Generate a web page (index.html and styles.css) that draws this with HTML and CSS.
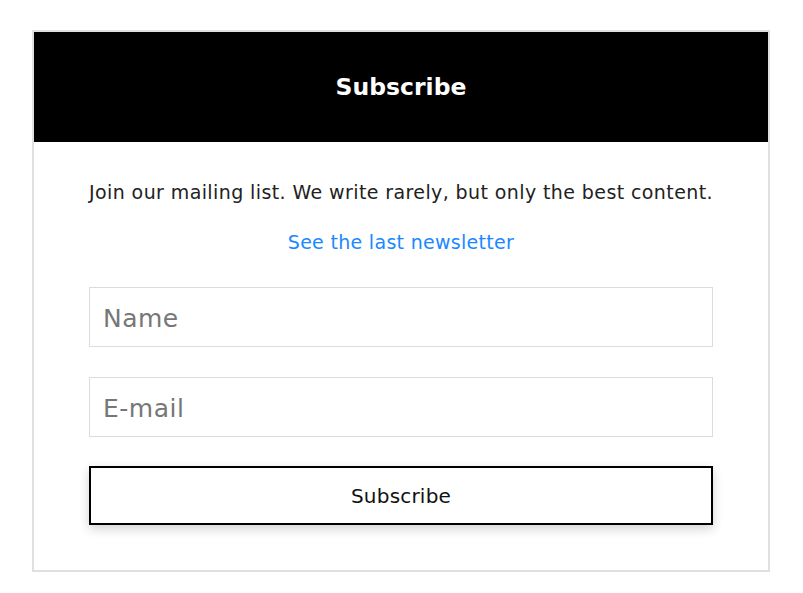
FILE: index.html
```html
<!DOCTYPE html>
<html lang="en">
<head>
<meta charset="utf-8">
<title>Subscribe</title>
<link rel="stylesheet" href="styles.css">
</head>
<body>
<div class="card">
  <header class="card-header">
    <h1 class="card-title">Subscribe</h1>
  </header>
  <div class="card-body">
    <p class="intro">Join our mailing list. We write rarely, but only the best content.</p>
    <a class="last-link" href="#">See the last newsletter</a>
    <form class="form">
      <input class="field" type="text" placeholder="Name">
      <input class="field field-last" type="email" placeholder="E-mail">
      <button class="submit" type="button">Subscribe</button>
    </form>
  </div>
</div>
</body>
</html>
```

FILE: styles.css
```css
* { box-sizing: border-box; }

html, body {
  margin: 0;
  padding: 0;
  background: #fff;
}

body {
  font-family: "DejaVu Sans", "Liberation Sans", sans-serif;
  color: #222;
  padding: 30px 33px 0 32px;
}

.card {
  width: 738px;
  height: 542px;
  border: 2px solid #e0e0e0;
  display: flex;
  flex-direction: column;
}

.card-header {
  height: 110px;
  background: #000;
  display: flex;
  align-items: center;
  justify-content: center;
}

.card-title {
  margin: 0;
  color: #fff;
  font-size: 23.5px;
  font-weight: bold;
  line-height: 1;
  padding-top: 1px;
}

.card-body {
  padding: 36px 55px 0 55px;
  display: flex;
  flex-direction: column;
  align-items: center;
}

.intro {
  margin: 0;
  font-size: 19px;
  letter-spacing: 0.4px;
  line-height: 28px;
  color: #222;
  text-align: center;
  white-space: nowrap;
}

.last-link {
  margin-top: 22px;
  font-size: 19px;
  letter-spacing: 0.3px;
  line-height: 28px;
  color: #1a88ff;
  text-decoration: none;
}

.form {
  margin-top: 31px;
  width: 624px;
  display: flex;
  flex-direction: column;
}

.field {
  height: 60px;
  border: 1px solid #dcdcdc;
  padding: 2px 13px 0;
  font-family: inherit;
  font-size: 25px;
  letter-spacing: 0.5px;
  color: #222;
  outline: none;
  margin-bottom: 30px;
}

.field-last {
  margin-bottom: 29px;
}

.field::placeholder {
  color: #777;
}

.submit {
  height: 59px;
  border: 2px solid #000;
  background: #fff;
  font-family: inherit;
  font-size: 20px;
  letter-spacing: 0.2px;
  color: #111;
  box-shadow: 0 4px 10px rgba(0, 0, 0, 0.18);
  cursor: pointer;
}
```
